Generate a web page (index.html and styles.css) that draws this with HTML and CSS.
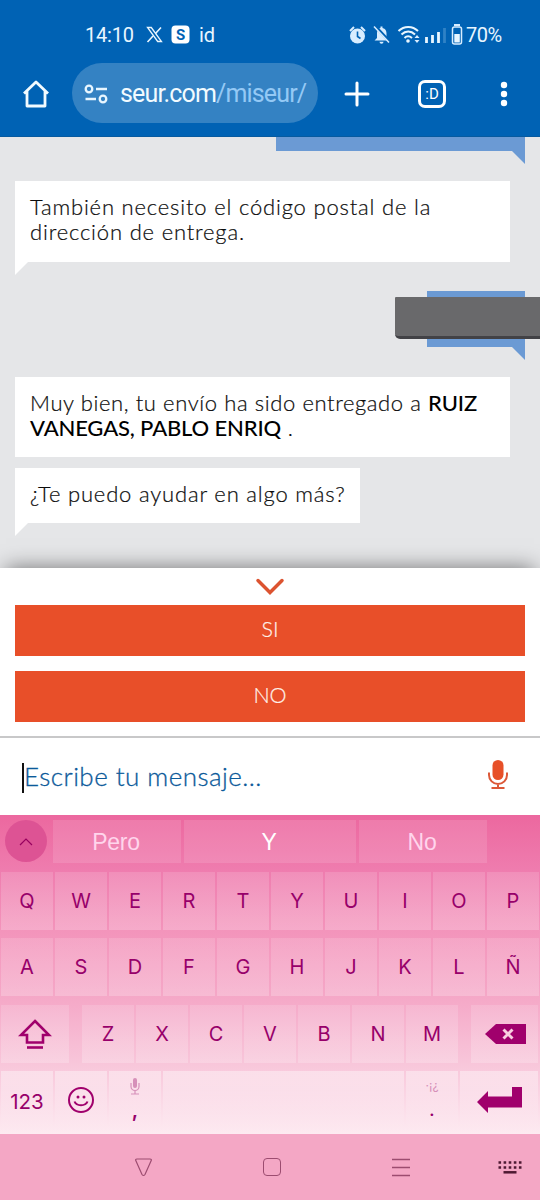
FILE: index.html
```html
<!DOCTYPE html>
<html lang="es">

<head>
    <meta charset="UTF-8" />
    <meta name="viewport" content="width=device-width, initial-scale=1.0" />
    <title>SEUR - Chat</title>
    <link rel="stylesheet" href="styles.css">
</head>

<body>
    <header class="browser">
        <div class="status">
            <span class="clock">14:10</span>
            <svg class="status-left" width="64" height="22" viewBox="0 0 64 22">
                <path d="M2.500 3.500h3.800l10.200 14h-3.800z" fill="none" stroke="#e8f6ff" stroke-width="1.300" />
                <path d="M16 3.500 10.500 9.500M8 12 2.500 18" stroke="#e8f6ff" stroke-width="1.600" />
                <rect x="26.500" y="1.500" width="18" height="18" rx="4" fill="#fff" />
                <text x="35.500" y="16" text-anchor="middle" class="s-letter">S</text>
            </svg>
            <span class="id-mark">id</span>
            <svg class="status-right" width="118" height="26" viewBox="0 0 118 26">
                <g fill="#d8edff">
                    <circle cx="9.500" cy="14" r="7.500" />
                    <path d="M9.500 9.500v5l3 2" fill="none" stroke="#0062b4" stroke-width="1.600" />
                    <path d="M2 9 6 5M17 9l-4-4" stroke="#d8edff" stroke-width="2" />
                    <path d="M26.500 18.500l2.500-2.500v-5c0-3 2-4.500 3.500-5v-1.500h2v1.500c3 .7 4 3 4 5.500v4.500l2.500 2.500z" />
                    <path d="M31.500 19.800h4a2 2 0 0 1-4 0z" />
                    <path d="M27 4l15 16" stroke="#0062b4" stroke-width="3" />
                    <path d="M26 4.500l15 16" stroke="#d8edff" stroke-width="1.500" />
                </g>
                <g fill="none" stroke="#e8f6ff" stroke-width="2">
                    <path d="M50.500 9c5.500-5.500 14-5.500 19.500 0" />
                    <path d="M53.500 12.500c4-4 9.500-4 13.500 0" />
                    <path d="M56.500 16c2.200-2.200 5-2.200 7.500 0" />
                </g>
                <circle cx="60" cy="19" r="1.800" fill="#e8f6ff" />
                <path d="M66.500 16l2.500-3 2.500 3zM66.500 18l2.500 3 2.500-3z" fill="#d8edff" />
                <path d="M78.500 15v6M84.500 13v8M90.500 10v11" stroke="#e8f6ff" stroke-width="2.800" />
                <path d="M96.500 6v15" stroke="#2f82c6" stroke-width="2.800" />
                <rect x="104.500" y="5" width="9" height="17" rx="2" fill="none" stroke="#d8edff" stroke-width="1.500" />
                <path d="M106 3h6" stroke="#d8edff" stroke-width="2" />
                <rect x="106.300" y="12" width="5.500" height="8.500" fill="#e8f6ff" />
            </svg>
            <span class="battery">70%</span>
        </div>
        <div class="toolbar">
            <svg class="home" width="28" height="30" viewBox="0 0 28 30">
                <path d="M2 14.500 14 3l12 11.500M5 12v15h18V12" fill="none" stroke="#f2fbff" stroke-width="2.800" stroke-linejoin="round" />
            </svg>
            <div class="address">
                <svg width="24" height="20" viewBox="0 0 24 20" fill="none" stroke="#e8f6ff" stroke-width="2.300">
                    <circle cx="5" cy="5" r="3.300" />
                    <path d="M12 5h11M1.500 15h10.500" />
                    <circle cx="19" cy="15" r="3.300" />
                </svg>
                <span class="url">seur.com<span class="path">/miseur/</span></span>
            </div>
            <svg class="plus" width="26" height="26" viewBox="0 0 26 26">
                <path d="M13 2v22M2 13h22" stroke="#fff" stroke-width="3" stroke-linecap="round" />
            </svg>
            <div class="tabs">:D</div>
            <svg class="more" width="8" height="26" viewBox="0 0 8 26" fill="#fff">
                <circle cx="4" cy="4" r="3.200" />
                <circle cx="4" cy="13" r="3.200" />
                <circle cx="4" cy="22" r="3.200" />
            </svg>
        </div>
    </header>

    <main class="chat">
        <div class="bubble user first"></div>
        <div class="bubble bot tail one">También necesito el código postal de la<br>dirección de entrega.</div>
        <div class="bubble user second">
            <div class="redacted"></div>
        </div>
        <div class="bubble bot two">Muy bien, tu envío ha sido entregado a <b>RUIZ<br>VANEGAS, PABLO ENRIQ</b> .</div>
        <div class="bubble bot tail three">¿Te puedo ayudar en algo más?</div>
    </main>

    <section class="answers">
        <svg class="chevron" width="32" height="20" viewBox="0 0 32 20">
            <path d="M4 3.500 16 15.500 28 3.500" fill="none" stroke="#dc5330" stroke-width="3.500" stroke-linecap="round" />
        </svg>
        <button class="answer">SI</button>
        <button class="answer">NO</button>
    </section>

    <div class="message">
        <span class="caret"></span>
        <span class="placeholder">Escribe tu mensaje...</span>
        <svg class="mic" width="22" height="32" viewBox="0 0 22 32">
            <rect x="5.500" y="1" width="11" height="20" rx="5.500" fill="#e75028" />
            <path d="M2 13.500v2.500a9 9 0 0 0 18 0v-2.500M11 25v4M4.500 29h13" fill="none" stroke="#dc5838" stroke-width="2" />
        </svg>
    </div>

    <section class="keyboard">
        <div class="suggestions">
            <div class="expand">
                <svg width="14" height="9" viewBox="0 0 14 9">
                    <path d="M1 8 7 2l6 6" fill="none" stroke="#97005f" stroke-width="1.200" />
                </svg>
            </div>
            <div class="word">Pero</div>
            <div class="word main">Y</div>
            <div class="word">No</div>
        </div>
        <div class="keys">
            <div class="key">Q</div>
            <div class="key">W</div>
            <div class="key">E</div>
            <div class="key">R</div>
            <div class="key">T</div>
            <div class="key">Y</div>
            <div class="key">U</div>
            <div class="key">I</div>
            <div class="key">O</div>
            <div class="key">P</div>
        </div>
        <div class="keys">
            <div class="key">A</div>
            <div class="key">S</div>
            <div class="key">D</div>
            <div class="key">F</div>
            <div class="key">G</div>
            <div class="key">H</div>
            <div class="key">J</div>
            <div class="key">K</div>
            <div class="key">L</div>
            <div class="key">Ñ</div>
        </div>
        <div class="keys letters">
            <div class="key shift">
                <svg width="34" height="32" viewBox="0 0 34 32">
                    <path d="M17 3 31 17h-6v7.500H9V17H3z" fill="none" stroke="#a0006c" stroke-width="2.600" />
                    <path d="M9 29.500h16" stroke="#a0006c" stroke-width="2.600" />
                </svg>
            </div>
            <div class="key">Z</div>
            <div class="key">X</div>
            <div class="key">C</div>
            <div class="key">V</div>
            <div class="key">B</div>
            <div class="key">N</div>
            <div class="key">M</div>
            <div class="key delete">
                <svg width="41" height="20" viewBox="0 0 41 20">
                    <path d="M0 10 11 0h30v20H11z" fill="#a0006c" />
                    <path d="M18.500 5.500l9 9M27.500 5.500l-9 9" stroke="#f9cfe0" stroke-width="3" />
                </svg>
            </div>
        </div>
        <div class="keys bottom">
            <div class="key numbers">123</div>
            <div class="key">
                <svg width="28" height="28" viewBox="0 0 28 28">
                    <circle cx="14" cy="14" r="12" fill="none" stroke="#a0006c" stroke-width="2" />
                    <circle cx="11" cy="11" r="1.500" fill="#a0006c" />
                    <circle cx="17" cy="11" r="1.500" fill="#a0006c" />
                    <path d="M7.500 15.500c2 5 11 5 13 0" fill="none" stroke="#a0006c" stroke-width="2" />
                </svg>
            </div>
            <div class="key stacked">
                <svg width="10" height="17" viewBox="0 0 10 17">
                    <rect x="3" y="0" width="4" height="10" rx="2" fill="#d690b9" />
                    <path d="M1 5v3.500a4 4 0 0 0 8 0V5M5 12v4M1 16h8" fill="none" stroke="#d690b9" stroke-width="1.200" />
                </svg>
                <span>,</span>
            </div>
            <div class="key space"></div>
            <div class="key stacked">
                <small>·¡¿</small>
                <span class="dot">.</span>
            </div>
            <div class="key enter">
                <svg width="46" height="26" viewBox="0 0 46 26">
                    <path d="M0 15 11 4v5.500h24V0h10v20.500H11V26z" fill="#a0006c" />
                </svg>
            </div>
        </div>
    </section>

    <nav class="navigation">
        <svg width="18" height="19" viewBox="0 0 18 19">
            <path d="M2 1h13q2 0 1 2L10 16.500q-1.500 2-3 0L1 3q-1-2 1-2z" fill="none" stroke="#9c4c70" stroke-width="1.200" />
        </svg>
        <div class="square"></div>
        <svg width="20" height="19" viewBox="0 0 20 19">
            <path d="M1 1.500h18M1 9.500h18M1 17.500h18" stroke="#9c4c70" stroke-width="1.300" />
        </svg>
        <svg class="kb" width="24" height="14" viewBox="0 0 24 14" fill="none" stroke="#4d1932" stroke-width="2.500">
            <path d="M.5 2.500h23M.5 7.500h23" stroke-dasharray="2.600 2.500" />
            <path d="M5.500 12.300h13" />
        </svg>
    </nav>
</body>

</html>
```
FILE: styles.css
```css
* {
    box-sizing: border-box;
}

body {
    margin: 0;
    width: 540px;
    height: 1200px;
    overflow: hidden;
    font-family: Lato, "Liberation Sans", sans-serif;
    background-color: #fff;
}

svg {
    display: block;
    flex: none;
}

/* Navegador */
.browser {
    height: 137px;
    padding-top: 22px;
    background-color: #0062b4;
    border-bottom: 1px solid #075a9f;
}

.status {
    display: flex;
    align-items: center;
    height: 26px;
    padding-left: 85px;
    color: #e8f6ff;
    font-family: Roboto, sans-serif;
    font-size: 20px;
}

.clock {
    width: 60px;
    letter-spacing: -0.2px;
}

.s-letter {
    font: bold 15px Roboto, sans-serif;
    fill: #0062b4;
}

.id-mark {
    width: 148px;
    font-size: 20px;
}

.status-left {
    margin-right: -10px;
}

.status-right {
    margin-left: 1px;
}

.battery {
    letter-spacing: -0.5px;
}

.toolbar {
    display: flex;
    align-items: center;
    height: 60px;
    margin-top: 15px;
    padding-left: 22px;
}

.address {
    display: flex;
    align-items: center;
    width: 246px;
    height: 60px;
    margin-left: 22px;
    padding: 1px 0 0 12px;
    border-radius: 30px;
    background-color: #3482c3;
    color: #f2fbff;
}

.url {
    margin-left: 12px;
    font-family: Roboto, sans-serif;
    font-size: 25px;
    letter-spacing: -0.85px;
    white-space: nowrap;
}

.path {
    color: #94c9f5;
}

.home,
.plus,
.tabs,
.more {
    margin-top: 1px;
}

.plus {
    margin-left: 26px;
}

.tabs {
    width: 28px;
    height: 28px;
    margin-left: 48px;
    border: 3px solid #fff;
    border-radius: 7px;
    color: #fff;
    font: 15px/22px Roboto, sans-serif;
    text-align: center;
}

.more {
    margin-left: 54px;
}

/* Conversación */
.chat {
    display: flex;
    flex-direction: column;
    align-items: flex-start;
    height: 431px;
    padding: 0 15px;
    background-color: #e5e6e8;
}

.bubble {
    position: relative;
    color: #0c0c0c;
    font-size: 22px;
    letter-spacing: 0.82px;
    line-height: 25px;
    white-space: nowrap;
}

.bot {
    width: 495px;
    padding: 13px 15px;
    background-color: #fff;
    font-weight: 300;
    -webkit-text-stroke: 0.2px;
}

.bot b {
    color: #000;
    font-weight: 500;
    letter-spacing: -0.15px;
    -webkit-text-stroke: 0;
}

.user {
    align-self: flex-end;
    background-color: #6b9ad4;
}

.tail::after,
.user::after {
    content: "";
    position: absolute;
    top: 100%;
    left: 0;
    width: 13px;
    height: 13px;
    background-color: #fff;
    clip-path: polygon(0 0, 100% 0, 0 100%);
}

.user::after {
    left: auto;
    right: 0;
    background-color: #6b9ad4;
    clip-path: polygon(0 0, 100% 0, 100% 100%);
}

.first {
    width: 249px;
    height: 14px;
}

.one {
    height: 81px;
    margin-top: 30px;
}

.second {
    width: 98px;
    height: 56px;
    margin-top: 29px;
}

.redacted {
    position: absolute;
    z-index: 1;
    top: 6px;
    left: -32px;
    width: 145px;
    height: 42px;
    border-bottom: 3px solid #424246;
    border-radius: 1px 0 0 5px;
    background-color: #69696b;
}

.two {
    height: 80px;
    margin-top: 30px;
    letter-spacing: 0.6px;
}

.three {
    width: 345px;
    height: 55px;
    margin-top: 11px;
}

/* Respuestas */
.answers {
    position: relative;
    display: flex;
    flex-direction: column;
    gap: 15px;
    height: 170px;
    padding: 9px 15px 0;
    border-bottom: 2px solid #c8c8c9;
    background-color: #fff;
    box-shadow: 0 -6px 20px -6px rgba(0, 0, 0, 0.5);
}

.chevron {
    align-self: center;
    margin-bottom: -7px;
}

.answer {
    height: 51px;
    padding: 0 0 3px;
    border: none;
    background-color: #e84f29;
    color: #fff0e8;
    font-family: inherit;
    font-size: 21.5px;
    font-weight: 300;
    -webkit-text-stroke: 0.2px;
}

.message {
    position: relative;
    display: flex;
    align-items: center;
    height: 77px;
    padding: 0 0 2px 22px;
    background-color: #fff;
}

.caret {
    width: 2px;
    height: 30px;
    margin-top: 5px;
    background-color: #111;
}

.placeholder {
    width: 463px;
    color: #0c5a9a;
    font-size: 26px;
    font-weight: 300;
    letter-spacing: 0.45px;
    white-space: nowrap;
    -webkit-text-stroke: 0.3px;
}

.mic {
    margin-bottom: 1px;
}

/* Teclado */
.keyboard {
    height: 319px;
    padding-top: 5px;
    background: linear-gradient(#ec689f 0%, #ef7daf 18%, #f394bb 36%, #f5a9c8 58%, #f8c6da 78%, #fdeaf1 100%);
    color: #97006a;
    font-family: Inter, "Liberation Sans", sans-serif;
}

.suggestions {
    display: flex;
    gap: 3px;
    height: 43px;
    margin-bottom: 9px;
    padding-left: 5px;
}

.expand {
    display: flex;
    align-items: center;
    justify-content: center;
    width: 42px;
    height: 42px;
    margin-right: 3px;
    border-radius: 50%;
    background-color: #dd5394;
}

.word {
    flex: none;
    width: 128px;
    padding-right: 2px;
    background-color: rgba(255, 255, 255, 0.12);
    color: #ffd5ec;
    font: 23px/45px "Liberation Sans", sans-serif;
    letter-spacing: -0.3px;
    text-align: center;
}

.word.main {
    width: 172px;
    color: #fff;
}

.keys {
    display: flex;
    gap: 2px;
    height: 58px;
    margin-bottom: 8px;
    padding: 0 1px;
}

.key {
    display: flex;
    align-items: center;
    justify-content: center;
    width: 52px;
    flex: none;
    background: linear-gradient(rgba(255, 255, 255, 0.14), rgba(255, 255, 255, 0.22));
    font-size: 20px;
}

.letters {
    margin-top: 9px;
}

.letters .shift {
    width: 68px;
    margin-right: 11px;
}

.letters .delete {
    width: 67px;
    margin-left: 11px;
    padding-left: 1px;
}

.bottom .key {
    background: linear-gradient(rgba(255, 255, 255, 0.4), rgba(255, 255, 255, 0));
}

.bottom .numbers {
    padding-top: 2px;
    font-size: 20.5px;
}

.bottom .space {
    width: 241px;
}

.bottom .enter {
    width: 78px;
    padding-left: 2px;
}

.stacked {
    flex-direction: column;
    justify-content: flex-start;
    padding-top: 7px;
}

.stacked svg,
.stacked small {
    height: 17px;
}

.stacked small {
    color: #d690b9;
    font-size: 12px;
}

.stacked span {
    margin-top: 3px;
    font-weight: 600;
}

.stacked .dot {
    margin-top: 2px;
    font-weight: 400;
}

.navigation {
    display: flex;
    align-items: center;
    height: 66px;
    padding-left: 135px;
    background-color: #f4a7c5;
}

.square {
    width: 18px;
    height: 18px;
    margin: 0 110px;
    border: 1px solid #9c4c70;
    border-radius: 4px;
}

.kb {
    margin-left: 87px;
}
```
